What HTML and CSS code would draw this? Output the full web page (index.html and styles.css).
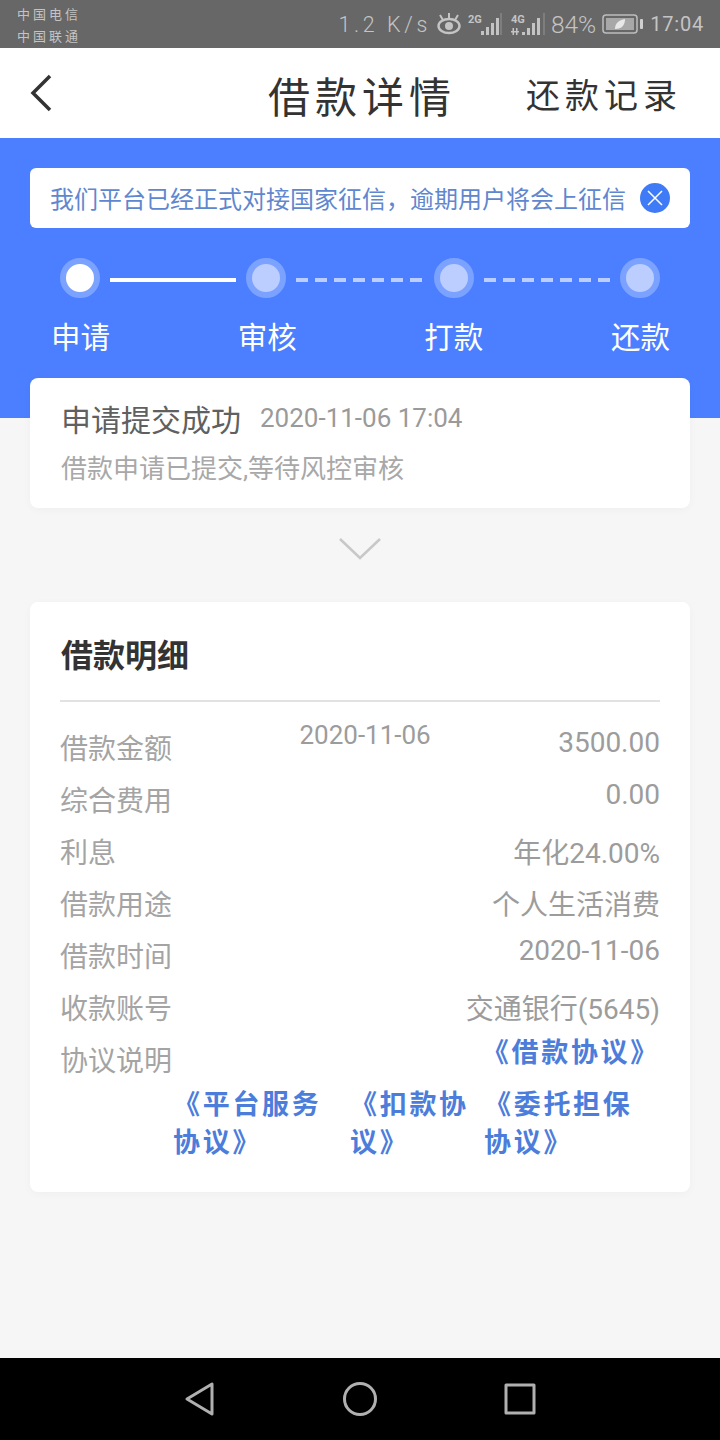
FILE: index.html
```html
<!DOCTYPE html>
<html lang="zh-CN">
  <head>
    <meta charset="utf-8">
    <title>借款详情</title>
    <link rel="stylesheet" href="styles.css">
  </head>
  <body>
    <div class="status-bar">
      <div class="carriers">
        <span>中国电信</span>
        <span>中国联通</span>
      </div>
      <div class="status-right">
        <span class="speed">1.2 K/s</span>
        <svg class="icon-eye" width="26" height="24" viewBox="0 0 26 24" fill="none" stroke="#c4c4c4">
          <ellipse cx="13" cy="14" rx="10.5" ry="7" stroke-width="2.4"/>
          <circle cx="13" cy="14" r="4" fill="#c4c4c4" stroke="none"/>
          <path d="M4 3l3 5M13 1v5M22 3l-3 5" stroke-width="2"/>
        </svg>
        <svg class="icon-signal" width="34" height="24" viewBox="0 0 34 24" fill="#c4c4c4">
          <text x="0" y="11" class="net-label">2G</text>
          <rect x="13" y="19" width="3" height="4"/>
          <rect x="18" y="15" width="3" height="8"/>
          <rect x="23" y="11" width="3" height="12"/>
          <rect x="28" y="6" width="3" height="17"/>
          <rect x="32.5" y="1" width="1" height="22" opacity=".5"/>
        </svg>
        <svg class="icon-signal second" width="34" height="24" viewBox="0 0 34 24" fill="#c4c4c4">
          <text x="0" y="11" class="net-label">4G</text>
          <path d="M1.500 16h1.500v7H1.500zM5 16h1.500v7H5zM0 19h8v1.500H0z"/>
          <rect x="11" y="20" width="3" height="3"/>
          <rect x="16" y="16" width="3" height="7"/>
          <rect x="21" y="11" width="3" height="12"/>
          <rect x="26" y="6" width="3" height="17"/>
          <rect x="32.5" y="1" width="1" height="22" opacity=".5"/>
        </svg>
        <span class="battery-text">84%</span>
        <svg class="icon-battery" width="41" height="20" viewBox="0 0 41 20" fill="none">
          <rect x="1" y="1" width="34" height="18" rx="3" stroke="#bdbdbd" stroke-width="1.500"/>
          <rect x="4" y="4" width="28" height="12" fill="#a8a8a8"/>
          <path d="M13 15c0-6 4-9 10-10 0 6-3 10-10 10z" fill="#e8e8e8"/>
          <rect x="38" y="5" width="3" height="10" rx="1" fill="#d0d0d0"/>
        </svg>
        <span class="clock">17:04</span>
      </div>
    </div>

    <div class="top-bar">
      <svg class="back" width="24" height="38" viewBox="0 0 24 38" fill="none" stroke="#333" stroke-width="3.500">
        <path d="M21 2L4 19l17 17"/>
      </svg>
      <div class="page-title">借款详情</div>
      <div class="repay-link">还款记录</div>
    </div>

    <div class="main">
      <div class="hero">
        <div class="notice">
          <span class="notice-text">我们平台已经正式对接国家征信，逾期用户将会上征信</span>
          <svg width="30" height="30" viewBox="0 0 30 30" fill="none" stroke="#fff" stroke-width="1.500">
            <circle cx="15" cy="15" r="15" fill="#3f7bf6" stroke="none"/>
            <path d="M8 8l14 14M22 8L8 22"/>
          </svg>
        </div>
        <div class="steps">
          <div class="dot done"></div>
          <div class="line solid"></div>
          <div class="dot"></div>
          <div class="line dashed mid"></div>
          <div class="dot"></div>
          <div class="line dashed"></div>
          <div class="dot"></div>
        </div>
        <div class="step-labels">
          <span>申请</span>
          <span>审核</span>
          <span>打款</span>
          <span>还款</span>
        </div>
      </div>

      <div class="card progress-card">
        <div class="progress-head">
          <span class="progress-title">申请提交成功</span>
          <span class="progress-time">2020-11-06 17:04</span>
        </div>
        <div class="progress-desc">借款申请已提交,等待风控审核</div>
      </div>

      <svg class="expand" width="42" height="24" viewBox="0 0 42 24" fill="none" stroke="#c8c8c8" stroke-width="2.500">
        <path d="M1 2l20 19L41 2"/>
      </svg>

      <div class="card detail-card">
        <h2 class="detail-title">借款明细</h2>
        <div class="row">
          <span class="label">借款金额</span>
          <span class="mid-date">2020-11-06</span>
          <span class="value num">3500.00</span>
        </div>
        <div class="row">
          <span class="label">综合费用</span>
          <span class="value num">0.00</span>
        </div>
        <div class="row">
          <span class="label">利息</span>
          <span class="value">年化24.00%</span>
        </div>
        <div class="row">
          <span class="label">借款用途</span>
          <span class="value">个人生活消费</span>
        </div>
        <div class="row">
          <span class="label">借款时间</span>
          <span class="value num">2020-11-06</span>
        </div>
        <div class="row">
          <span class="label">收款账号</span>
          <span class="value">交通银行(5645)</span>
        </div>
        <div class="row">
          <span class="label">协议说明</span>
          <span class="agreement first">《借款协议》</span>
        </div>
        <div class="agreements">
          <span class="agreement service">《平台服务协议》</span>
          <span class="agreement debit">《扣款协议》</span>
          <span class="agreement entrust">《委托担保协议》</span>
        </div>
      </div>
    </div>

    <div class="nav-bar">
      <svg width="32" height="36" viewBox="0 0 32 36" fill="none" stroke="#b0b0b0" stroke-width="3" stroke-linejoin="round">
        <path d="M28 3v30L3 18z"/>
      </svg>
      <svg width="36" height="36" viewBox="0 0 36 36" fill="none" stroke="#b0b0b0" stroke-width="3">
        <circle cx="18" cy="18" r="15.500"/>
      </svg>
      <svg width="32" height="32" viewBox="0 0 32 32" fill="none" stroke="#b0b0b0" stroke-width="3" stroke-linejoin="round">
        <rect x="2" y="2" width="28" height="28"/>
      </svg>
    </div>
  </body>
</html>
```

FILE: styles.css
```css
* {
  box-sizing: border-box;
}

body {
  margin: 0;
  width: 720px;
  height: 1440px;
  display: flex;
  flex-direction: column;
  font-family: Roboto, "Noto Sans CJK SC", sans-serif;
  background-color: #f6f6f6;
}

.status-bar {
  height: 48px;
  padding: 0 16px 0 17px;
  display: flex;
  justify-content: space-between;
  align-items: center;
  background-color: #676767;
}

.carriers {
  display: flex;
  flex-direction: column;
  padding-top: 4px;
  font-size: 13px;
  line-height: 22px;
  letter-spacing: 3px;
  color: #c4c4c4;
}

.status-right {
  display: flex;
  align-items: center;
  color: #c4c4c4;
}

.speed {
  font-size: 21.5px;
  font-weight: 300;
  letter-spacing: 3.6px;
  margin-right: 5px;
}

.icon-eye {
  margin-right: 6px;
}

.icon-signal.second {
  margin-left: 9px;
  margin-right: 6px;
}

.net-label {
  font-size: 11px;
  font-weight: bold;
}

.battery-text {
  font-size: 24.5px;
  font-weight: 300;
  margin-right: 6px;
}

.icon-battery {
  margin-right: 7px;
}

.clock {
  font-size: 20px;
  letter-spacing: 0.8px;
}

.top-bar {
  height: 90px;
  padding-top: 3px;
  display: flex;
  align-items: center;
  background-color: #fff;
  color: #333;
}

.back {
  margin-left: 29px;
  margin-top: -4px;
}

.page-title {
  margin-left: 215px;
  font-size: 42px;
  letter-spacing: 5px;
}

.repay-link {
  margin-left: 70px;
  margin-top: -2px;
  font-size: 34px;
  letter-spacing: 5px;
}

.main {
  flex: 1;
}

.hero {
  height: 280px;
  padding-top: 30px;
  background-color: #4b7fff;
}

.notice {
  height: 60px;
  margin: 0 30px;
  padding: 0 20px;
  display: flex;
  justify-content: space-between;
  align-items: center;
  background-color: #fff;
  border-radius: 6px;
}

.notice-text {
  margin-top: -2px;
  font-size: 24px;
  color: #5f87cf;
}

.steps {
  margin-top: 30px;
  padding: 0 60px;
  display: flex;
  align-items: center;
}

.dot {
  width: 40px;
  height: 40px;
  border: 6px solid #7ca2ff;
  border-radius: 50%;
  background-color: #bccdff;
}

.dot.done {
  background-color: #fff;
}

.line {
  flex: 1;
  height: 4px;
  margin: 4px 10px 0;
}

.line.mid {
  flex: none;
  width: 128px;
}

.line.solid {
  background-color: #fff;
}

.line.dashed {
  background-image: repeating-linear-gradient(to right, #bccdff 0, #bccdff 12px, transparent 12px, transparent 19px);
}

.step-labels {
  margin-top: 20px;
  padding: 0 50px 0 51px;
  display: flex;
  justify-content: space-between;
  font-size: 29.5px;
  line-height: 40px;
  color: #fff;
}

.card {
  position: relative;
  margin: 0 30px;
  background-color: #fff;
  border-radius: 8px;
  box-shadow: 0 2px 10px rgba(0, 0, 0, 0.03);
}

.progress-card {
  height: 130px;
  margin-top: -40px;
  padding: 20px 31px 0;
}

.progress-head {
  display: flex;
  align-items: center;
  height: 40px;
}

.progress-title {
  font-size: 30px;
  color: #606060;
}

.progress-time {
  margin-left: 19px;
  font-size: 26px;
  color: #9a9a9a;
}

.progress-desc {
  margin-top: 11px;
  font-size: 26px;
  line-height: 40px;
  color: #a8a8a8;
}

.expand {
  display: block;
  margin: 29px auto 41px;
}

.detail-card {
  height: 590px;
  padding: 32px 30px 30px;
}

.detail-title {
  margin: 0 0 22px;
  padding: 0 0 22px 1px;
  font-size: 32px;
  line-height: 44px;
  font-weight: bold;
  color: #333;
  border-bottom: 2px solid #e2e2e2;
}

.row {
  height: 52px;
  display: flex;
  justify-content: space-between;
  align-items: flex-start;
}

.label,
.value {
  font-size: 28px;
  line-height: 52px;
  color: #a4a4a4;
}

.value {
  color: #9c9c9c;
}

.value.num {
  line-height: 38px;
}

.mid-date {
  font-size: 26px;
  line-height: 22px;
  color: #9c9c9c;
}

.agreement {
  font-size: 27px;
  line-height: 38px;
  font-weight: bold;
  letter-spacing: 2.7px;
  color: #4c7ddb;
}

.agreement.first {
  line-height: 34px;
}

.agreements {
  margin-top: -2px;
  margin-left: 113px;
  display: flex;
  align-items: flex-start;
}

.service {
  width: 177px;
}

.debit {
  width: 134px;
}

.entrust {
  width: 156px;
}

.nav-bar {
  height: 82px;
  padding-left: 184px;
  display: flex;
  align-items: center;
  gap: 126px;
  background-color: #000;
}
```
